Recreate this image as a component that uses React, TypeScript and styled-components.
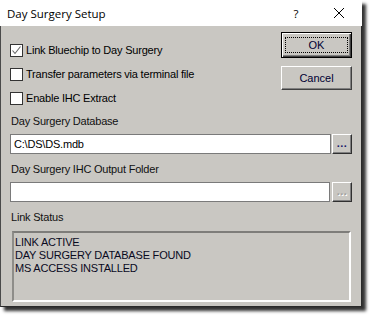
import styled, { createGlobalStyle } from "styled-components";

const GlobalStyle = createGlobalStyle`
  html, body {
    margin: 0;
    padding: 0;
    background: #ffffff;
  }
  body {
    width: 370px;
    height: 322px;
    overflow: hidden;
    font-family: "Liberation Sans", Arial, sans-serif;
  }
`;

const Window = styled.div`
  width: 362px;
  height: 307px;
  box-sizing: border-box;
  display: flex;
  flex-direction: column;
  background: #c9c7c2;
  border-left: 1px solid #4a4a4a;
  border-right: 1px solid #2a2a2a;
  border-bottom: 1px solid #2a2a2a;
  box-shadow: 4px 4px 3px rgba(0, 0, 0, 0.8);
`;

const TitleBar = styled.div`
  height: 26px;
  flex: none;
  display: flex;
  align-items: center;
  background: #ffffff;
  margin-left: -1px;
  margin-right: -1px;
  padding-left: 7px;
  font-family: "Open Sans", "Noto Sans", sans-serif;
  font-size: 11.5px;
  color: #000;
`;

const Title = styled.span`
  flex: 1;
`;

const TitleButton = styled.div<{ w: number }>`
  width: ${(p) => p.w}px;
  height: 26px;
  display: flex;
  align-items: center;
  justify-content: center;
`;

const Body = styled.div`
  flex: 1;
  display: flex;
  flex-direction: column;
  padding: 6px 9px 0 9px;
  font-size: 11px;
  letter-spacing: -0.2px;
  color: #000;
`;

const TopRow = styled.div`
  display: flex;
  justify-content: space-between;
`;

const Checks = styled.div`
  display: flex;
  flex-direction: column;
  gap: 11px;
  padding-top: 12px;
`;

const CheckRow = styled.label`
  display: flex;
  align-items: center;
  gap: 3px;
  height: 13px;
  line-height: 13px;
`;

const Box = styled.span`
  width: 13px;
  height: 13px;
  box-sizing: border-box;
  border: 1px solid #333333;
  background: #ffffff;
  display: flex;
  align-items: center;
  justify-content: center;
`;

const ButtonCol = styled.div`
  display: flex;
  flex-direction: column;
  gap: 8px;
`;

const PushButton = styled.div<{ isDefault?: boolean }>`
  width: 71px;
  height: ${(p) => (p.isDefault ? 26 : 24)}px;
  box-sizing: border-box;
  display: flex;
  align-items: center;
  justify-content: center;
  font-size: 11px;
  letter-spacing: 0;
  color: #000033;
  background: #c9c7c2;
  border-top: 1px solid #ffffff;
  border-left: 1px solid #ffffff;
  border-right: 1px solid #404040;
  border-bottom: 1px solid #404040;
  box-shadow: inset -1px -1px 0 #808080;
  ${(p) =>
    p.isDefault &&
    `
    border: 1px solid #000;
    box-shadow: inset 1px 1px 0 #fff, inset -1px -1px 0 #404040, inset -2px -2px 0 #808080;
  `}
`;

const Focus = styled.span`
  display: flex;
  align-items: center;
  justify-content: center;
  width: 63px;
  height: 16px;
  box-sizing: border-box;
  border: 1px dotted #000;
`;

const FieldLabel = styled.div<{ top: number }>`
  margin-top: ${(p) => p.top}px;
  height: 13px;
  line-height: 13px;
  padding-left: 1px;
  color: #111;
`;

const FieldRow = styled.div<{ btnGap: number }>`
  display: flex;
  gap: ${(p) => p.btnGap}px;
  margin-top: 6px;
  height: 20px;
`;

const TextInput = styled.div`
  flex: 1;
  height: 20px;
  box-sizing: border-box;
  background: #ffffff;
  border: 1px solid #7a7a7a;
  padding-left: 3px;
  line-height: 18px;
  color: #000;
`;

const Browse = styled.div<{ disabled?: boolean }>`
  width: 20px;
  height: 20px;
  box-sizing: border-box;
  display: flex;
  align-items: flex-start;
  justify-content: center;
  padding-top: 1px;
  font-weight: bold;
  letter-spacing: 0.5px;
  font-size: 11px;
  line-height: 14px;
  color: ${(p) => (p.disabled ? "#a0a0a0" : "#1a1a6a")};
  text-shadow: ${(p) => (p.disabled ? "1px 1px 0 #fff" : "none")};
  border-top: 1px solid #ffffff;
  border-left: 1px solid #ffffff;
  border-right: 1px solid #303030;
  border-bottom: 1px solid #303030;
  box-shadow: inset -1px -1px 0 #808080;
`;

const StatusBox = styled.div`
  margin-top: 7px;
  margin-left: 2px;
  margin-right: 1px;
  height: 71px;
  box-sizing: border-box;
  border-top: 2px solid #7e7d7a;
  border-left: 2px solid #8e8d89;
  border-right: 2px solid #ffffff;
  border-bottom: 2px solid #ffffff;
  padding: 3px 0 0 1px;
  line-height: 13px;
  font-size: 11px;
  color: #0a0a1e;
`;

const CheckMark = () => (
  <svg width="11" height="11" viewBox="0 0 11 11">
    <path d="M1.5 5.5 L4 8.5 L9.5 1.5" fill="none" stroke="#666" strokeWidth="1.1" />
  </svg>
);

const App = () => {
  const checks = [
    { label: "Link Bluechip to Day Surgery", checked: true },
    { label: "Transfer parameters via terminal file", checked: false },
    { label: "Enable IHC Extract", checked: false },
  ];

  return (
    <>
      <GlobalStyle />
      <Window>
        <TitleBar>
          <Title>Day Surgery Setup</Title>
          <TitleButton w={40}>?</TitleButton>
          <TitleButton w={46}>
            <svg width="12" height="12" viewBox="0 0 12 12">
              <path d="M1 1 L11 11 M11 1 L1 11" stroke="#000" strokeWidth="1" />
            </svg>
          </TitleButton>
        </TitleBar>
        <Body>
          <TopRow>
            <Checks>
              {checks.map((c) => (
                <CheckRow key={c.label}>
                  <Box>{c.checked && <CheckMark />}</Box>
                  {c.label}
                </CheckRow>
              ))}
            </Checks>
            <ButtonCol>
              <PushButton isDefault>
                <Focus>OK</Focus>
              </PushButton>
              <PushButton>Cancel</PushButton>
            </ButtonCol>
          </TopRow>
          <FieldLabel top={10}>Day Surgery Database</FieldLabel>
          <FieldRow btnGap={1}>
            <TextInput>C:\DS\DS.mdb</TextInput>
            <Browse>...</Browse>
          </FieldRow>
          <FieldLabel top={9}>Day Surgery IHC Output Folder</FieldLabel>
          <FieldRow btnGap={2}>
            <TextInput />
            <Browse disabled>...</Browse>
          </FieldRow>
          <FieldLabel top={9}>Link Status</FieldLabel>
          <StatusBox>
            LINK ACTIVE
            <br />
            DAY SURGERY DATABASE FOUND
            <br />
            MS ACCESS INSTALLED
          </StatusBox>
        </Body>
      </Window>
    </>
  );
};

export default App;
